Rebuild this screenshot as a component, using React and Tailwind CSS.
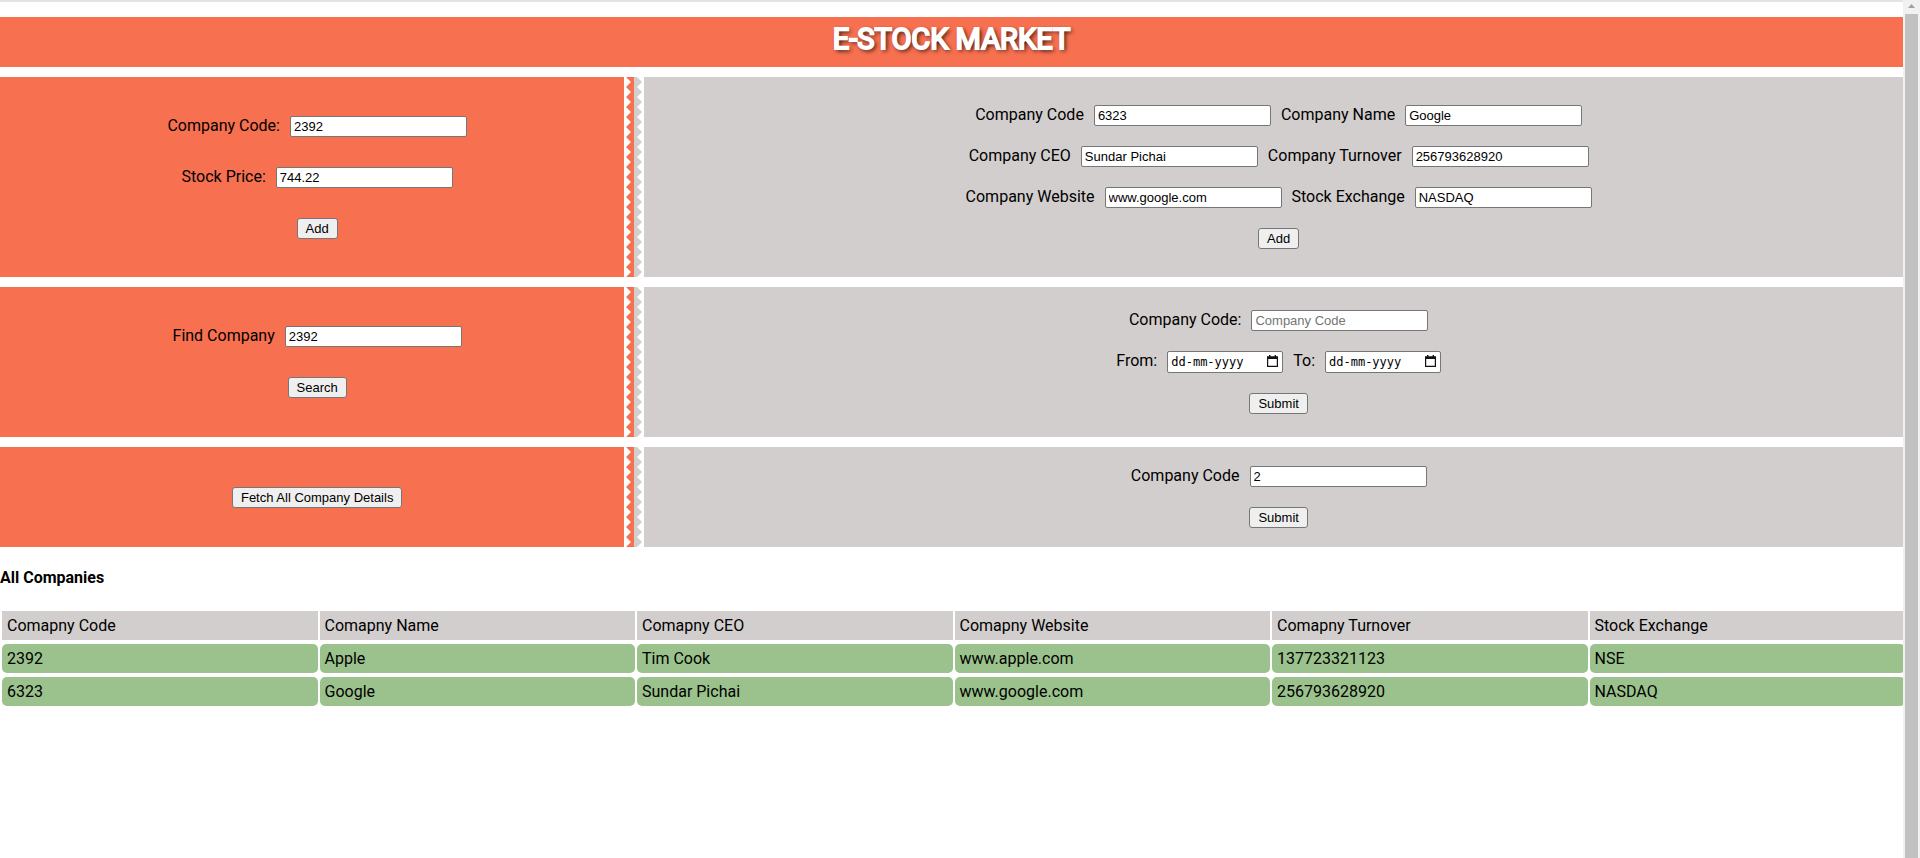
import React, { useId } from "react";

const ORANGE = "#f77050";
const GREY = "#d2cecd";

const companies = [
  ["2392", "Apple", "Tim Cook", "www.apple.com", "137723321123", "NSE"],
  ["6323", "Google", "Sundar Pichai", "www.google.com", "256793628920", "NASDAQ"],
];

const headings = [
  "Comapny Code",
  "Comapny Name",
  "Comapny CEO",
  "Comapny Website",
  "Comapny Turnover",
  "Stock Exchange",
];

function Field({ label, value, placeholder }) {
  const id = useId();
  return (
    <div className="flex items-baseline gap-[10px]">
      <label htmlFor={id}>{label}</label>
      <input
        id={id}
        type="text"
        defaultValue={value}
        placeholder={placeholder}
        className="h-[21px] w-[177px] rounded-[2px] border border-[#767676] bg-white px-[3px] font-['Liberation_Sans',Arial,sans-serif] text-[13px] leading-[15px] text-black placeholder:text-[#757575]"
      />
    </div>
  );
}

function DateField({ label }) {
  const id = useId();
  return (
    <div className="flex items-baseline gap-[10px]">
      <label htmlFor={id}>{label}</label>
      <div className="relative">
        <input
          id={id}
          type="text"
          placeholder="dd-mm-yyyy"
          className="h-[22px] w-[116px] rounded-[2px] border border-[#767676] bg-white px-[3px] font-['DejaVu_Sans_Mono',monospace] text-[12px] leading-[15px] text-black placeholder:text-black"
        />
        <svg viewBox="0 0 11 12" className="absolute right-[5px] top-[4px] h-[12px] w-[11px]" aria-hidden="true">
          <path d="M2 0h1.4v1.2h4.2V0H9v1.2h2V12H0V1.2h2zM1.2 4v6.8h8.6V4z" fill="#111" fillRule="evenodd" />
        </svg>
      </div>
    </div>
  );
}

function Button({ children }) {
  return (
    <button
      type="button"
      className="h-[21px] rounded-[3px] border border-[#767676] bg-[#efefef] px-[8px] font-['Liberation_Sans',Arial,sans-serif] text-[13px] leading-[15px] text-black"
    >
      {children}
    </button>
  );
}

function ZigZag() {
  const id = useId();
  return (
    <svg className="absolute inset-0 h-full w-full" aria-hidden="true">
      <defs>
        <pattern id={id} width="20" height="10" patternUnits="userSpaceOnUse">
          <path d="M2 0L7 5L2 10H10V0Z" fill={ORANGE} />
          <path d="M10 0H13L18 5L13 10H10Z" fill={GREY} />
        </pattern>
      </defs>
      <rect width="20" height="100%" fill={`url(#${id})`} />
    </svg>
  );
}

function Band({ height, left, right }) {
  return (
    <section className={`grid grid-cols-[1fr_2fr] ${height}`}>
      <div className="flex bg-[#f77050] bg-clip-content pr-[10px]">
        <form className="-mr-[10px] flex flex-1 flex-col items-center justify-center gap-[30px]">{left}</form>
      </div>
      <div className="flex">
        <div className="relative -ml-[10px] w-[20px] shrink-0">
          <ZigZag />
        </div>
        <form className="flex flex-1 flex-col items-center justify-center gap-[20px] bg-[#d2cecd] pl-[10px]">
          {right}
        </form>
      </div>
    </section>
  );
}

function Row({ children }) {
  return <div className="flex gap-[10px]">{children}</div>;
}

export default function App() {
  return (
    <div className="flex min-h-screen bg-white font-[Roboto,sans-serif] text-[16px] leading-[19px] text-black">
      <main className="min-w-0 flex-1 overflow-hidden border-t-2 border-[#e3e3e3] pt-[15px]">
        <header className="flex h-[50px] justify-center bg-[#f77050] pt-[5px]">
          <h1 className="text-[29px] leading-[34px] font-normal text-white [-webkit-text-stroke:2px_#fff] [text-shadow:2px_2px_4px_#000]">
            E-STOCK MARKET
          </h1>
        </header>

        <div className="mt-[10px] flex flex-col gap-[10px]">
          <Band
            height="min-h-[200px]"
            left={
              <>
                <Field label="Company Code:" value="2392" />
                <Field label="Stock Price:" value="744.22" />
                <Button>Add</Button>
              </>
            }
            right={
              <>
                <Row>
                  <Field label="Company Code" value="6323" />
                  <Field label="Company Name" value="Google" />
                </Row>
                <Row>
                  <Field label="Company CEO" value="Sundar Pichai" />
                  <Field label="Company Turnover" value="256793628920" />
                </Row>
                <Row>
                  <Field label="Company Website" value="www.google.com" />
                  <Field label="Stock Exchange" value="NASDAQ" />
                </Row>
                <Button>Add</Button>
              </>
            }
          />
          <Band
            height="min-h-[150px]"
            left={
              <>
                <Field label="Find Company" value="2392" />
                <Button>Search</Button>
              </>
            }
            right={
              <>
                <Field label="Company Code:" placeholder="Company Code" />
                <Row>
                  <DateField label="From:" />
                  <DateField label="To:" />
                </Row>
                <Button>Submit</Button>
              </>
            }
          />
          <Band
            height="min-h-[100px]"
            left={<Button>Fetch All Company Details</Button>}
            right={
              <>
                <Field label="Company Code" value="2" />
                <Button>Submit</Button>
              </>
            }
          />
        </div>

        <h2 className="mt-[21px] mb-[20px] font-bold">All Companies</h2>

        <table className="w-[calc(100%+4px)] table-fixed border-separate border-spacing-x-[2px] border-spacing-y-[4px] text-left">
          <thead>
            <tr>
              {headings.map((h) => (
                <th key={h} scope="col" className="bg-[#d2cecd] p-[5px] font-normal">
                  {h}
                </th>
              ))}
            </tr>
          </thead>
          <tbody>
            {companies.map((row) => (
              <tr key={row[0]}>
                {row.map((cell) => (
                  <td key={cell} className="rounded-[5px] bg-[#9bc28c] p-[5px]">
                    {cell}
                  </td>
                ))}
              </tr>
            ))}
          </tbody>
        </table>
      </main>

      <div className="flex w-[17px] shrink-0 flex-col bg-[#f1f1f1] px-[2px]" aria-hidden="true">
        <svg viewBox="0 0 13 14" className="h-[14px] w-[13px]">
          <path d="M3 8L6.5 4L10 8Z" fill="#a0a0a0" />
        </svg>
        <div className="flex-1 bg-[#c1c1c1]" />
      </div>
    </div>
  );
}
